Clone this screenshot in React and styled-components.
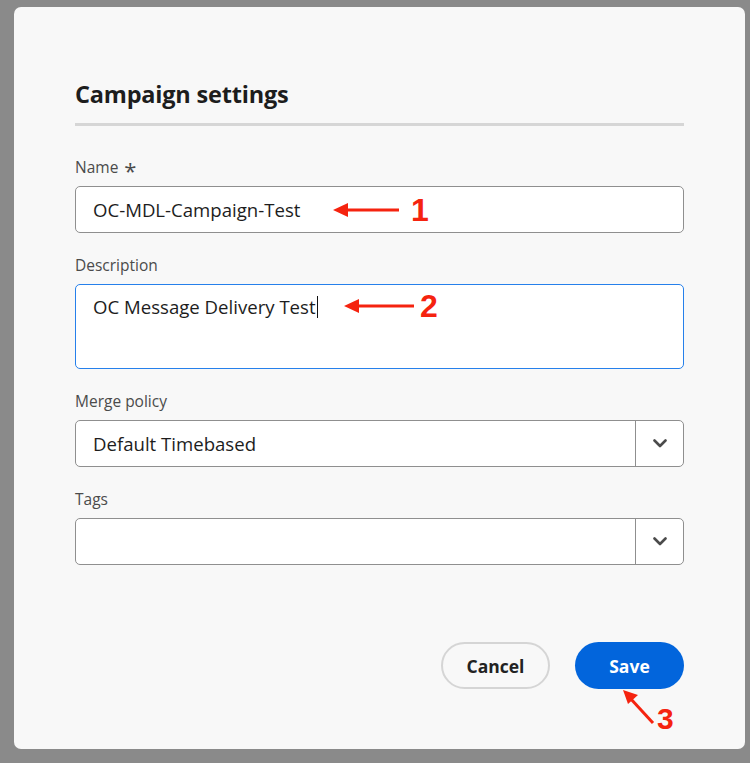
import React from "react";
import styled, { createGlobalStyle } from "styled-components";

const GlobalStyle = createGlobalStyle`
  html, body {
    margin: 0;
    padding: 0;
    background: #8a8a8a;
  }
  body {
    font-family: "Open Sans", "Noto Sans", sans-serif;
  }
`;

const Backdrop = styled.div`
  width: 750px;
  height: 763px;
  padding: 7px 5px 14px 14px;
  box-sizing: border-box;
  background: #8a8a8a;
`;

const Dialog = styled.div`
  height: 100%;
  background: #f8f8f8;
  border-radius: 7px;
  padding: 71px 61px 0 61px;
  box-sizing: border-box;
  display: flex;
  flex-direction: column;
`;

const Title = styled.h2`
  margin: 0;
  font-size: 23.5px;
  font-weight: 700;
  color: #1d1d1d;
  line-height: 32px;
  letter-spacing: -0.2px;
`;

const Divider = styled.hr`
  margin: 13px 0 31px;
  border: 0;
  height: 3px;
  background: #d6d6d6;
`;

const Field = styled.div`
  display: flex;
  flex-direction: column;
  margin-bottom: ${(p) => p.gap || 22}px;
`;

const Label = styled.label`
  font-size: 15.5px;
  color: #4b4b4b;
  line-height: 20px;
  margin-bottom: 9px;
  display: flex;
  align-items: center;
  gap: 6px;
`;

const Asterisk = styled.span`
  font-size: 22px;
  line-height: 14px;
  margin-top: 6px;
  color: #4b4b4b;
`;

const InputWrap = styled.div`
  position: relative;
  height: ${(p) => p.h || 47}px;
  box-sizing: border-box;
  background: #fff;
  border: ${(p) => (p.focused ? "1.5px solid #2680eb" : "1.5px solid #8f8f8f")};
  border-radius: 5px;
  display: flex;
  align-items: ${(p) => (p.multiline ? "flex-start" : "center")};
`;

const Value = styled.div`
  flex: 1;
  padding: ${(p) => (p.multiline ? "9px 17px" : "0 17px")};
  font-size: 18.6px;
  color: #1d1d1d;
  display: flex;
  align-items: center;
`;

const Caret = styled.span`
  display: inline-block;
  width: 1.5px;
  height: 22px;
  background: #111;
  margin-left: 1px;
`;

const ChevronBox = styled.div`
  width: 47px;
  align-self: stretch;
  border-left: 1.5px solid #8f8f8f;
  display: flex;
  align-items: center;
  justify-content: center;
  color: #4b4b4b;
`;

const Footer = styled.div`
  margin-top: auto;
  margin-bottom: 60px;
  display: flex;
  justify-content: flex-end;
  gap: 25px;
  position: relative;
`;

const Button = styled.button`
  width: 109px;
  height: 47px;
  border-radius: 24px;
  font-family: inherit;
  font-size: 17.5px;
  font-weight: 700;
  cursor: pointer;
  box-sizing: border-box;
  border: ${(p) => (p.primary ? "none" : "2px solid #d5d5d5")};
  background: ${(p) => (p.primary ? "#0265dc" : "#f8f8f8")};
  color: ${(p) => (p.primary ? "#fff" : "#222")};
`;

const Callout = styled.div`
  position: absolute;
  left: ${(p) => p.x}px;
  top: ${(p) => p.y}px;
  display: flex;
  align-items: center;
  gap: ${(p) => p.gap || 12}px;
  color: #f5230f;
  pointer-events: none;
`;

const Number = styled.span`
  font-family: "Liberation Sans", Arial, sans-serif;
  font-weight: 700;
  font-size: ${(p) => p.size || 32}px;
  line-height: 1;
  color: #f5230f;
`;

const Chevron = () => (
  <svg width="14" height="9" viewBox="0 0 14 9">
    <path d="M1.5 1.5 L7 7 L12.5 1.5" fill="none" stroke="currentColor" strokeWidth="2.6" strokeLinecap="round" strokeLinejoin="round" />
  </svg>
);

const LeftArrow = ({ w }) => (
  <svg width={w} height="16" viewBox={`0 0 ${w} 16`}>
    <line x1="10" y1="8" x2={w} y2="8" stroke="#f5230f" strokeWidth="3" />
    <path d="M0 8 L15 1 L15 15 Z" fill="#f5230f" />
  </svg>
);

const App = () => {
  return (
    <>
      <GlobalStyle />
      <Backdrop>
        <Dialog>
          <Title>Campaign settings</Title>
          <Divider />

          <Field gap={22}>
            <Label>
              Name <Asterisk>*</Asterisk>
            </Label>
            <InputWrap>
              <Value>OC-MDL-Campaign-Test</Value>
              <Callout x={257} y={7}>
                <LeftArrow w={66} />
                <Number>1</Number>
              </Callout>
            </InputWrap>
          </Field>

          <Field gap={22}>
            <Label>Description</Label>
            <InputWrap h={85} focused multiline>
              <Value multiline>
                OC Message Delivery Test
                <Caret />
              </Value>
              <Callout x={268} y={5} gap={6}>
                <LeftArrow w={70} />
                <Number>2</Number>
              </Callout>
            </InputWrap>
          </Field>

          <Field gap={22}>
            <Label>Merge policy</Label>
            <InputWrap>
              <Value>Default Timebased</Value>
              <ChevronBox>
                <Chevron />
              </ChevronBox>
            </InputWrap>
          </Field>

          <Field gap={0}>
            <Label>Tags</Label>
            <InputWrap>
              <Value />
              <ChevronBox>
                <Chevron />
              </ChevronBox>
            </InputWrap>
          </Field>

          <Footer>
            <Button>Cancel</Button>
            <Button primary>Save</Button>
            <Callout x={548} y={48}>
              <svg width="32" height="36" viewBox="0 0 32 36">
                <line x1="7" y1="8" x2="30" y2="33" stroke="#f5230f" strokeWidth="3" />
                <path d="M0 0 L15 5 L5 14 Z" fill="#f5230f" />
              </svg>
            </Callout>
            <Callout x={582} y={62}>
              <Number size={30}>3</Number>
            </Callout>
          </Footer>
        </Dialog>
      </Backdrop>
    </>
  );
};

export default App;
